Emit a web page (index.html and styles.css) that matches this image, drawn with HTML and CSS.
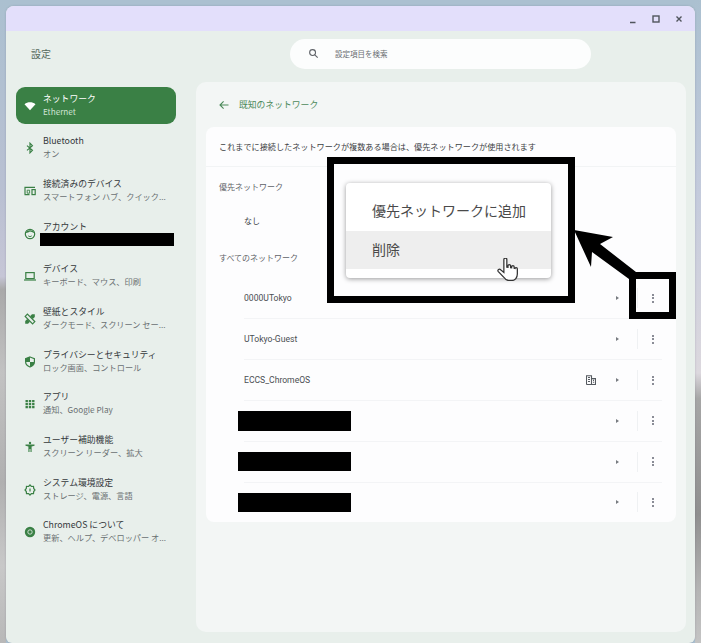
FILE: index.html
```html
<!DOCTYPE html>
<html>
  <head>
    <meta name="viewport" content="width=device-width, initial-scale=1" />
    <link rel="stylesheet" href="styles.css">
  </head>
  <body>
    <div class="window">
      <div class="titlebar">
        <svg class="win-btn" viewBox="0 0 12 12"><path d="M3 9.5h5.5" /></svg>
        <svg class="win-btn" viewBox="0 0 12 12"><rect x="3" y="3" width="6" height="6" /></svg>
        <svg class="win-btn" viewBox="0 0 12 12"><path d="M3.5 3.5l5 5M8.5 3.5l-5 5" /></svg>
      </div>

      <div class="topbar">
        <div class="app-title">設定</div>
        <div class="search">
          <svg class="search-icon" viewBox="0 0 12 12"><circle cx="5" cy="5" r="3.2" /><path d="M7.4 7.4l3.2 3.2" /></svg>
          <span>設定項目を検索</span>
        </div>
      </div>

      <div class="content">
        <nav class="sidebar">
          <div class="nav-item active">
            <svg class="nav-icon" viewBox="0 0 12 12"><path class="solid" d="M0.5 4.2C3.6 1.6 8.4 1.6 11.5 4.2L6 10.2z" /></svg>
            <div class="nav-text"><div class="nav-name">ネットワーク</div><div class="nav-sub">Ethernet</div></div>
          </div>
          <div class="nav-item">
            <svg class="nav-icon" viewBox="0 0 12 12"><path d="M3 3.6l5.4 4.8L6 10.8V1.2l2.4 2.4L3 8.4" /></svg>
            <div class="nav-text"><div class="nav-name">Bluetooth</div><div class="nav-sub">オン</div></div>
          </div>
          <div class="nav-item">
            <svg class="nav-icon" viewBox="0 0 12 12"><path d="M1 9.6V2.4h10M0.5 9.6h5" /><rect x="8" y="4.6" width="3.2" height="5" /><path d="M3.2 5.2h2.4v3H3.2z" stroke-width="0.9" /></svg>
            <div class="nav-text"><div class="nav-name">接続済みのデバイス</div><div class="nav-sub">スマートフォン ハブ、クイック...</div></div>
          </div>
          <div class="nav-item">
            <svg class="nav-icon" viewBox="0 0 12 12"><circle cx="6" cy="6" r="4.7" /><path class="solid" d="M1.6 5.2C2.6 1.2 9.4 1.2 10.4 5.2C8.4 4.2 7 4 6 3.6C5 4.4 3.4 4.6 1.6 5.2z" /><path d="M4.2 7.8C5 8.8 7 8.8 7.8 7.8" stroke-width="0.9" /></svg>
            <div class="nav-text"><div class="nav-name">アカウント</div><div class="redact-sub"></div></div>
          </div>
          <div class="nav-item">
            <svg class="nav-icon" viewBox="0 0 12 12"><rect x="1.8" y="2.6" width="8.4" height="6" /><path d="M0 10h12" /></svg>
            <div class="nav-text"><div class="nav-name">デバイス</div><div class="nav-sub">キーボード、マウス、印刷</div></div>
          </div>
          <div class="nav-item">
            <svg class="nav-icon" viewBox="0 0 12 12"><path d="M1.2 3.4L3.4 1.2L10.8 8.6L8.6 10.8z" /><path class="solid" d="M10.8 1.2V4L8.8 6L6 3.2L8 1.2zM1.2 10.8V8L3.2 6L6 8.8L4 10.8z" /></svg>
            <div class="nav-text"><div class="nav-name">壁紙とスタイル</div><div class="nav-sub">ダークモード、スクリーン セー...</div></div>
          </div>
          <div class="nav-item">
            <svg class="nav-icon" viewBox="0 0 12 12"><path d="M6 1l4.4 1.6v3.2C10.4 8.4 8.4 10.2 6 11C3.6 10.2 1.6 8.4 1.6 5.8V2.6z" /><path class="solid" d="M6 1v5H1.6V2.6zM6 6h4.4C10.4 8.4 8.4 10.2 6 11z" /></svg>
            <div class="nav-text"><div class="nav-name">プライバシーとセキュリティ</div><div class="nav-sub">ロック画面、コントロール</div></div>
          </div>
          <div class="nav-item">
            <svg class="nav-icon" viewBox="0 0 12 12"><path class="dots" d="M1.5 2h2.4v2.2H1.5zM4.8 2h2.4v2.2H4.8zM8.1 2h2.4v2.2H8.1zM1.5 5h2.4v2.2H1.5zM4.8 5h2.4v2.2H4.8zM8.1 5h2.4v2.2H8.1zM1.5 8h2.4v2.2H1.5zM4.8 8h2.4v2.2H4.8zM8.1 8h2.4v2.2H8.1z" /></svg>
            <div class="nav-text"><div class="nav-name">アプリ</div><div class="nav-sub">通知、Google Play</div></div>
          </div>
          <div class="nav-item">
            <svg class="nav-icon" viewBox="0 0 12 12"><circle class="solid" cx="6" cy="2" r="1.2" /><path class="solid" d="M1.5 3.6h9v1.2L7.6 5.4V11H6.5V8h-1v3H4.4V5.4L1.5 4.8z" /></svg>
            <div class="nav-text"><div class="nav-name">ユーザー補助機能</div><div class="nav-sub">スクリーン リーダー、拡大</div></div>
          </div>
          <div class="nav-item">
            <svg class="nav-icon" viewBox="0 0 12 12"><path d="M6 1l1.4 1.5 2.1-.1.2 2L11 6l-1.3 1.6-.2 2-2.1-.1L6 11 4.6 9.5l-2.1.1-.2-2L1 6l1.3-1.6.2-2 2.1.1z" /><path d="M6 4.4v3.2" /></svg>
            <div class="nav-text"><div class="nav-name">システム環境設定</div><div class="nav-sub">ストレージ、電源、言語</div></div>
          </div>
          <div class="nav-item">
            <svg class="nav-icon" viewBox="0 0 12 12"><circle class="solid" cx="6" cy="6" r="5.2" /><circle class="hole" cx="6" cy="6" r="2.2" /></svg>
            <div class="nav-text"><div class="nav-name">ChromeOS について</div><div class="nav-sub">更新、ヘルプ、デベロッパー オ...</div></div>
          </div>
        </nav>

        <main class="panel">
          <div class="panel-head">
            <svg class="back" viewBox="0 0 10 10"><path d="M9.5 5H1M4.6 1.4L1 5l3.6 3.6" /></svg>
            <span>既知のネットワーク</span>
          </div>
          <section class="card">
            <div class="card-desc">これまでに接続したネットワークが複数ある場合は、優先ネットワークが使用されます</div>
            <div class="label label-first">優先ネットワーク</div>
            <div class="none-row">なし</div>
            <div class="label label-all">すべてのネットワーク</div>
            <div class="net-row">
              <span class="net-name">0000UTokyo</span>
              <span class="caret"></span><span class="sep"></span>
              <span class="kebab"><i></i><i></i><i></i></span>
            </div>
            <div class="net-row">
              <span class="net-name">UTokyo-Guest</span>
              <span class="caret"></span><span class="sep"></span>
              <span class="kebab"><i></i><i></i><i></i></span>
            </div>
            <div class="net-row">
              <span class="net-name">ECCS_ChromeOS</span>
              <svg class="building" viewBox="0 0 10 10"><path d="M0.5 9.5V0.8h5v8.7M5.5 3.6h4v5.9H0.5M2 2.5h2M2 4.5h2M2 6.5h2M7 5.4h1.2M7 7.2h1.2" /></svg>
              <span class="caret"></span><span class="sep"></span>
              <span class="kebab"><i></i><i></i><i></i></span>
            </div>
            <div class="net-row">
              <span class="redact-name"></span>
              <span class="caret"></span><span class="sep"></span>
              <span class="kebab"><i></i><i></i><i></i></span>
            </div>
            <div class="net-row">
              <span class="redact-name"></span>
              <span class="caret"></span><span class="sep"></span>
              <span class="kebab"><i></i><i></i><i></i></span>
            </div>
            <div class="net-row last">
              <span class="redact-name"></span>
              <span class="caret"></span><span class="sep"></span>
              <span class="kebab"><i></i><i></i><i></i></span>
            </div>
          </section>
        </main>
      </div>
    </div>

    <!-- annotation drawn over the screenshot -->
    <div class="callout">
      <div class="menu">
        <div class="menu-item">優先ネットワークに追加</div>
        <div class="menu-item hover">削除</div>
      </div>
      <svg class="hand" viewBox="1 2 21 20">
        <path d="M7 3.2c0-1.6 2.6-1.6 2.6 0V10l1 .1V8.8c0-1.3 2.3-1.3 2.3 0v1.6l.9.1V9.6c0-1.2 2.2-1.2 2.2 0v1.3l.8.2c0-1 2-1 2 .2V16c0 3-2 5.6-4.6 5.6h-3c-2 0-3-1-4.2-2.8L2 13.6c-.8-1.4 1-2.6 2.2-1.4L7 14.6z" />
      </svg>
    </div>
    <div class="kebab-frame"></div>
    <svg class="arrow" viewBox="0 0 701 643"><polygon points="574,230 613,237 600,244 636,272 629,279 592,252 591,267" /></svg>
  </body>
</html>
```

FILE: styles.css
```css
* {
  box-sizing: border-box;
}

html,
body {
  height: 100%;
}

/* wallpaper shows as thin strips either side of the window */
body {
  margin: 0;
  padding: 6px 6px 0 6px;
  overflow: hidden;
  position: relative;
  font-family: "Noto Sans CJK JP", "Noto Sans", sans-serif;
  color: #3c4043;
  background-color: #abc0d0;
  background-image:
    linear-gradient(180deg, #abc0d0 0, #b9c0d2 30%, #c6c6d6 43%, #a9a9a9 45%, #c2c2c2 58%, #b0b0b0 75%, #c8c8c8 88%, #b8b8b8 100%),
    linear-gradient(180deg, #abc0d0 0, #c4cbdc 30%, #dcd8de 58%, #a6a6a6 62%, #8f8f8f 80%, #b5b5b5 92%, #c4c4c4 100%);
  background-position: left top, right top;
  background-size: 6px 100%;
  background-repeat: no-repeat;
}

.window {
  height: 637px;
  display: flex;
  flex-direction: column;
  background-color: #e8efeb;
  border-radius: 8px 8px 6px 6px;
  box-shadow: 0 0 2px rgba(60, 60, 80, 0.25);
  overflow: hidden;
}

.titlebar {
  height: 25px;
  flex: none;
  display: flex;
  justify-content: flex-end;
  align-items: center;
  gap: 11px;
  padding: 0 10px 0 0;
  background-color: #e3dffb;
}

.win-btn {
  width: 12px;
  height: 12px;
  fill: none;
  stroke: #50555c;
  stroke-width: 1.4;
}

.topbar {
  height: 51px;
  flex: none;
  display: flex;
  align-items: center;
  padding-bottom: 6px;
}

.app-title {
  width: 284px;
  padding-left: 25px;
  font-size: 10px;
  color: #56695d;
}

.search {
  width: 301px;
  height: 30px;
  display: flex;
  align-items: center;
  gap: 16px;
  padding-left: 18px;
  border-radius: 15px;
  background-color: #fcfdfd;
  font-size: 7.5px;
  color: #6a6e72;
}

.search-icon {
  width: 11px;
  height: 11px;
  fill: none;
  stroke: #5f6368;
  stroke-width: 1.2;
}

.content {
  flex: 1;
  display: flex;
  min-height: 0;
}

.sidebar {
  width: 190px;
  flex: none;
  padding: 5px 0 0 10px;
  display: flex;
  flex-direction: column;
  gap: 5.7px;
}

.nav-item {
  width: 160px;
  height: 37px;
  flex: none;
  display: flex;
  align-items: center;
  border-radius: 9px;
  padding-left: 8px;
}

.nav-item.active {
  background-color: #3a8045;
  color: #fff;
}

.nav-icon {
  width: 12px;
  height: 12px;
  flex: none;
  margin-right: 7px;
  fill: none;
  stroke: #3a8045;
  stroke-width: 1.2;
}

.nav-icon .solid {
  fill: #3a8045;
  stroke: none;
}

.nav-icon .dots {
  fill: #3a8045;
  stroke: none;
}

.nav-icon .hole {
  fill: none;
  stroke: #e8efeb;
  stroke-width: 0.8;
}

.active .nav-icon .solid {
  fill: #fff;
}

.nav-text {
  min-width: 0;
  padding-bottom: 2px;
  white-space: nowrap;
}

.nav-name {
  font-size: 8.8px;
  line-height: 13px;
  color: #34383b;
}

.nav-sub {
  font-size: 8.2px;
  line-height: 13px;
  color: #6a6f72;
}

.active .nav-name {
  color: #fff;
}

.active .nav-sub {
  color: #cfe3d3;
}

.redact-sub {
  width: 134px;
  height: 13px;
  margin-left: -3px;
  background-color: #000;
}

.panel {
  width: 490px;
  height: 550px;
  flex: none;
  background-color: #f3f6f5;
  border-radius: 10px;
  padding: 0 10px;
}

.panel-head {
  height: 45px;
  display: flex;
  align-items: center;
  padding-left: 13px;
  gap: 10px;
  font-size: 8.8px;
  color: #4c8a5a;
}

.back {
  width: 10px;
  height: 10px;
  fill: none;
  stroke: #4c8a5a;
  stroke-width: 1.1;
}

.card {
  height: 395px;
  background-color: #fdfdfe;
  border-radius: 8px;
  font-size: 8px;
}

.card-desc {
  height: 40px;
  display: flex;
  align-items: center;
  padding-left: 13px;
  font-size: 8.13px;
  color: #3c4043;
  border-bottom: 1px solid #f2f4f5;
}

.label {
  display: flex;
  align-items: center;
  padding-left: 13px;
  color: #5f6368;
}

.label-first {
  height: 37px;
  padding-top: 2px;
}

.label-all {
  height: 40.6px;
  padding-bottom: 2px;
}

.none-row {
  height: 34px;
  display: flex;
  align-items: center;
  padding-left: 38px;
  padding-bottom: 2px;
  color: #3c4043;
}

.net-row {
  height: 40.8px;
  margin: 0 14px 0 38px;
  display: flex;
  align-items: center;
  border-bottom: 1px solid #f3f4f6;
  color: #4a4e52;
  font-family: Roboto, "Noto Sans", sans-serif;
  font-size: 8.6px;
}

.net-row.last {
  height: 39.8px;
  border-bottom: none;
}

.net-name {
  margin-right: auto;
}

.redact-name {
  width: 113px;
  height: 19.6px;
  margin-left: -6px;
  margin-right: auto;
  background-color: #000;
}

.building {
  width: 10px;
  height: 10px;
  margin-right: 20px;
  fill: none;
  stroke: #555a60;
  stroke-width: 1.1;
}

.caret {
  width: 0;
  height: 0;
  border-left: 3px solid #777b80;
  border-top: 2.5px solid transparent;
  border-bottom: 2.5px solid transparent;
}

.sep {
  width: 1px;
  height: 20px;
  margin: 0 14px 0 18px;
  background-color: #eff1f3;
}

.kebab {
  width: 2px;
  margin-right: 8px;
  display: flex;
  flex-direction: column;
  gap: 1.5px;
}

.kebab i {
  width: 2px;
  height: 2px;
  background-color: #8a8c96;
}

.callout {
  position: absolute;
  left: 327px;
  top: 157px;
  width: 248px;
  height: 146px;
  border: 7px solid #000;
  background-color: #fdfdfe;
}

.menu {
  position: absolute;
  left: 12px;
  top: 19px;
  width: 205px;
  height: 95px;
  padding-top: 10px;
  background-color: #fff;
  border-radius: 4px;
  box-shadow: 0 1px 5px rgba(0, 0, 0, 0.4);
}

.menu-item {
  height: 38px;
  display: flex;
  align-items: center;
  padding: 0 0 4px 26px;
  font-size: 14px;
  color: #4a4a4a;
}

.menu-item.hover {
  padding-bottom: 2px;
  background-color: #eeeeee;
}

.hand {
  position: absolute;
  left: 163px;
  top: 94px;
  width: 24px;
  height: 23px;
  fill: #fff;
  stroke: #333;
  stroke-width: 1.1;
}

.kebab-frame {
  position: absolute;
  left: 629px;
  top: 272px;
  width: 47px;
  height: 47px;
  border: 7px solid #000;
}

.arrow {
  position: absolute;
  left: 0;
  top: 0;
  width: 701px;
  height: 643px;
  pointer-events: none;
}
```
